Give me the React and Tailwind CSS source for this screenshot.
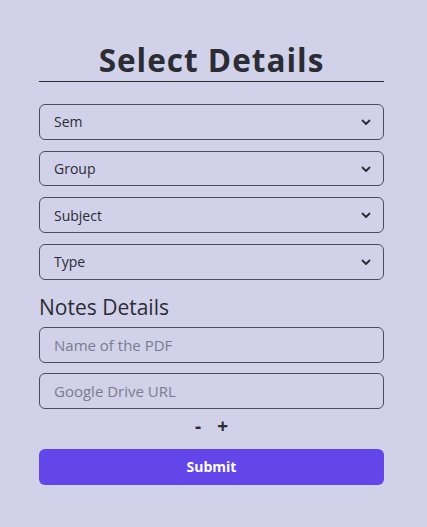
import { useState } from "react";

const fields = ["Sem", "Group", "Subject", "Type"];

const Chevron = () => (
  <svg
    className="pointer-events-none absolute right-[13px] top-1/2 -translate-y-1/2"
    width="10"
    height="10"
    viewBox="0 0 10 10"
    fill="none"
  >
    <path
      d="M1.5 3.5L5 7l3.5-3.5"
      stroke="#2b2c34"
      strokeWidth="1.8"
      strokeLinecap="round"
      strokeLinejoin="round"
    />
  </svg>
);

const App = () => {
  const [links, setLinks] = useState(1);

  return (
    <div
      className="min-h-[527px] bg-[#d1d1e9] text-[#2b2c34] pt-[39px]"
      style={{ fontFamily: '"Open Sans", "Noto Sans", sans-serif' }}
    >
      <div className="ml-[39px] w-[345px]">
        {/* header */}
        <h1 className="text-center text-[31.5px] font-bold tracking-[1px] leading-[41px] pb-[1px] border-b border-[#2b2c34]">
          Select Details
        </h1>

        {/* dropdowns */}
        <div className="mt-[22px] flex flex-col gap-[11px]">
          {fields.map((f) => (
            <div key={f} className="relative">
              <select className="appearance-none w-full h-[35.7px] rounded-md border border-[#4b4d5e] bg-transparent pl-[14px] text-[14px] text-[#2b2c34] outline-none">
                <option>{f}</option>
              </select>
              <Chevron />
            </div>
          ))}
        </div>

        {/* notes */}
        <h2 className="mt-[13px] text-[21px] leading-[28px] font-normal">
          Notes Details
        </h2>
        <div className="mt-[6px] flex flex-col gap-[10px]">
          <input
            placeholder="Name of the PDF"
            className="w-full h-[36px] rounded-md border border-[#4b4d5e] bg-transparent pl-[14px] text-[15px] placeholder-[#7a7c8e] outline-none"
          />
          <input
            placeholder="Google Drive URL"
            className="w-full h-[36px] rounded-md border border-[#4b4d5e] bg-transparent pl-[14px] text-[15px] placeholder-[#7a7c8e] outline-none"
          />
        </div>

        <div className="mt-[5px] flex justify-center gap-[16px] text-[19px] font-bold leading-[24px]">
          <button onClick={() => setLinks(Math.max(1, links - 1))}>-</button>
          <button onClick={() => setLinks(links + 1)}>+</button>
        </div>

        <button className="mt-[11px] w-full h-[36px] rounded-md bg-[#6246ea] text-[#fffffe] text-[14px] font-bold">
          Submit
        </button>
      </div>
    </div>
  );
};

export default App;
